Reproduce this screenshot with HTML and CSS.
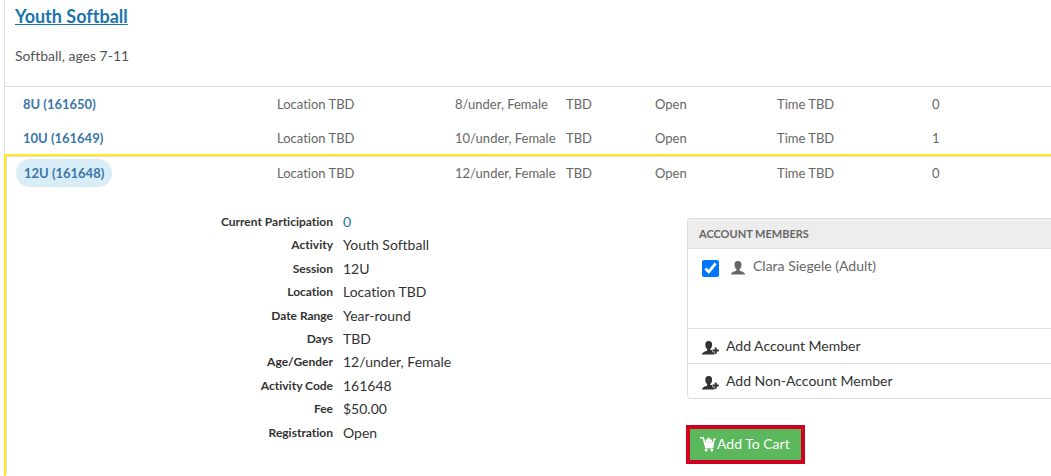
FILE: index.html
```
<!DOCTYPE html>
<html lang="en">
<head>
  <meta charset="UTF-8">
  <meta name="viewport" content="width=device-width, initial-scale=1.0">
  <title>Youth Softball</title>
  <link rel="stylesheet" href="styles.css">
</head>
<body>
  <!-- Shared icons -->
  <svg class="sprite" aria-hidden="true">
    <symbol id="user" viewBox="0 0 16 16">
      <path d="M8 1C5.500 1 4.400 2.500 4.500 5c.1 2 .9 3.300 1.900 4.100v1.700C4.600 11.600 1 12 1 14.500h14c0-2.500-3.600-2.900-5.400-3.700V9.100c1-.8 1.800-2.100 1.900-4.100C11.600 2.500 10.500 1 8 1z"/>
    </symbol>
    <symbol id="user-add" viewBox="0 0 18 16">
      <path d="M6.700 1C4.200 1 3.200 2.500 3.300 5c.1 2 .9 3.300 1.800 4.100v1.700C3.500 11.600 0 12 0 14.500h12.500v-2.200h-2.200V10H8.300v-.9c1-.8 1.700-2.100 1.800-4.100C10.200 2.500 9.200 1 6.700 1z"/>
      <path d="M12.700 7.500h2v2.100h2.100v2h-2.100v2.100h-2v-2.100h-2.100v-2h2.100z"/>
    </symbol>
    <symbol id="cart" viewBox="0 0 16 16">
      <path d="M0 1.700h3.200l2.300 8.500h7.200l1.400-7H16" fill="none" stroke="currentColor" stroke-width="1.600"/>
      <path d="M5 6.300h8.500l-.8 3.600H6z"/>
      <path d="M5.500 3.600h2V1.800h2.600v1.800h2v2.300H5.500z"/>
      <path d="M5 11h8.500v1.300H5z"/>
      <circle cx="6.200" cy="14" r="1.500"/>
      <circle cx="11.800" cy="14" r="1.500"/>
    </symbol>
  </svg>

  <main class="activity">
    <header class="activity-header">
      <h1><a href="#">Youth Softball</a></h1>
      <p>Softball, ages 7-11</p>
    </header>

    <table class="sessions">
      <colgroup>
        <col class="col-name">
        <col class="col-location">
        <col class="col-age">
        <col class="col-days">
        <col class="col-status">
        <col class="col-time">
        <col>
      </colgroup>
      <tbody>
        <tr>
          <td><a href="#" class="session-link">8U (161650)</a></td>
          <td>Location TBD</td>
          <td>8/under, Female</td>
          <td>TBD</td>
          <td>Open</td>
          <td>Time TBD</td>
          <td>0</td>
        </tr>
        <tr>
          <td><a href="#" class="session-link">10U (161649)</a></td>
          <td>Location TBD</td>
          <td>10/under, Female</td>
          <td>TBD</td>
          <td>Open</td>
          <td>Time TBD</td>
          <td>1</td>
        </tr>
      </tbody>
    </table>

    <section class="selected">
      <table class="sessions">
        <colgroup>
          <col class="col-name">
          <col class="col-location">
          <col class="col-age">
          <col class="col-days">
          <col class="col-status">
          <col class="col-time">
          <col>
        </colgroup>
        <tbody>
          <tr>
            <td><a href="#" class="session-link active">12U (161648)</a></td>
            <td>Location TBD</td>
            <td>12/under, Female</td>
            <td>TBD</td>
            <td>Open</td>
            <td>Time TBD</td>
            <td>0</td>
          </tr>
        </tbody>
      </table>

      <div class="details">
        <dl class="info">
          <dt>Current Participation</dt>
          <dd><a href="#">0</a></dd>
          <dt>Activity</dt>
          <dd>Youth Softball</dd>
          <dt>Session</dt>
          <dd>12U</dd>
          <dt>Location</dt>
          <dd>Location TBD</dd>
          <dt>Date Range</dt>
          <dd>Year-round</dd>
          <dt>Days</dt>
          <dd>TBD</dd>
          <dt>Age/Gender</dt>
          <dd>12/under, Female</dd>
          <dt>Activity Code</dt>
          <dd>161648</dd>
          <dt>Fee</dt>
          <dd>$50.00</dd>
          <dt>Registration</dt>
          <dd>Open</dd>
        </dl>

        <div class="signup">
          <div class="panel">
            <h2>Account Members</h2>
            <div class="members">
              <input type="checkbox" id="member1" checked>
              <label for="member1"><svg class="icon"><use href="#user"/></svg>Clara Siegele (Adult)</label>
            </div>
            <a href="#" class="panel-link"><svg class="icon-add"><use href="#user-add"/></svg>Add Account Member</a>
            <a href="#" class="panel-link"><svg class="icon-add"><use href="#user-add"/></svg>Add Non-Account Member</a>
          </div>
          <button type="button" class="add-button"><svg class="icon"><use href="#cart"/></svg>Add To Cart</button>
        </div>
      </div>
    </section>
  </main>
</body>
</html>
```
FILE: styles.css
```
* {
  box-sizing: border-box;
}

body {
  margin: 0;
  background: #fff;
  color: #333;
  font-family: Lato, "Liberation Sans", sans-serif;
  font-size: 14px;
  font-variant-ligatures: none;
  line-height: 20px;
}

a {
  color: #1b75ab;
  text-decoration: none;
}

.sprite {
  display: none;
}

.activity {
  min-height: 100vh;
  margin-left: 4px;
  display: flex;
  flex-direction: column;
}

/* Title and description */
.activity-header {
  padding: 6px 10px 20px;
  border-left: 1px solid #ddd;
  border-bottom: 1px solid #ddd;
}

.activity-header h1 {
  margin: 0 0 20px;
  font-size: 18px;
  line-height: 20px;
}

.activity-header h1 a {
  text-decoration: underline;
}

.activity-header p {
  margin: 0;
  color: #555;
}

/* Session rows */
.sessions {
  width: 100%;
  table-layout: fixed;
  border-spacing: 0;
  border-left: 1px solid #ddd;
  color: #666;
  font-size: 13px;
}

.sessions td {
  height: 34px;
  padding: 0 0 0 8px;
  white-space: nowrap;
}

.sessions tr:last-child td {
  height: 33px;
}

.col-name {
  width: 264px;
}

.col-location {
  width: 178px;
}

.col-age {
  width: 111px;
}

.col-days {
  width: 89px;
}

.col-status {
  width: 122px;
}

.col-time {
  width: 155px;
}

.session-link {
  display: inline-block;
  padding: 4px 8px;
  margin-left: 2px;
  border-radius: 14px;
  color: #3a76a8;
  font-weight: bold;
}

.session-link.active {
  margin-left: 1px;
  background: #d9edf7;
}

/* Expanded session */
.selected {
  flex: 1;
  border-top: 2px solid #ffeb1f;
  border-left: 2px solid #ffeb1f;
}

.selected .sessions {
  border-top: 1px solid #ddd;
}

.selected .col-name {
  width: 262px;
}

.selected .sessions tr:last-child td {
  height: 32px;
}

.details {
  display: flex;
  padding-bottom: 10px;
  border-left: 1px solid #ddd;
}

.info {
  flex: 0 0 680px;
  display: grid;
  grid-template-columns: 326px 1fr;
  grid-template-rows: repeat(10, 1fr);
  column-gap: 10px;
  height: 234px;
  margin: 23px 0 0;
}

.info dt {
  font-size: 12px;
  font-weight: bold;
  text-align: right;
}

.info dd {
  margin: 0;
}

.signup {
  flex: 1;
  padding-top: 29px;
}

.panel {
  border: 1px solid #ddd;
  border-right: 0;
  border-radius: 4px 0 0 4px;
}

.panel h2 {
  margin: 0;
  padding: 5px 11px 4px;
  background: #ededed;
  color: #666;
  font-size: 11px;
  text-transform: uppercase;
}

.members {
  display: flex;
  align-items: flex-start;
  min-height: 80px;
  padding: 7px 14px;
  border-top: 1px solid #ddd;
  color: #666;
}

.members input {
  width: 17px;
  height: 17px;
  margin: 4px 11px 0 0;
}

.members label {
  display: flex;
  gap: 7px;
}

.icon {
  width: 16px;
  height: 16px;
  fill: currentColor;
}

.members .icon {
  margin-top: 4px;
}

.panel-link {
  display: flex;
  align-items: center;
  gap: 6px;
  height: 35px;
  padding: 0 14px;
  border-top: 1px solid #ddd;
  color: #333;
}

.icon-add {
  width: 18px;
  height: 16px;
  margin-top: 4px;
  fill: currentColor;
}

.add-button {
  display: flex;
  align-items: center;
  gap: 1px;
  height: 39px;
  margin: 26px 0 0 -1px;
  padding: 0 11px 2px 10px;
  border: 4px solid #cf0020;
  background: #5cb85c;
  color: #fff;
  font: inherit;
}
```
